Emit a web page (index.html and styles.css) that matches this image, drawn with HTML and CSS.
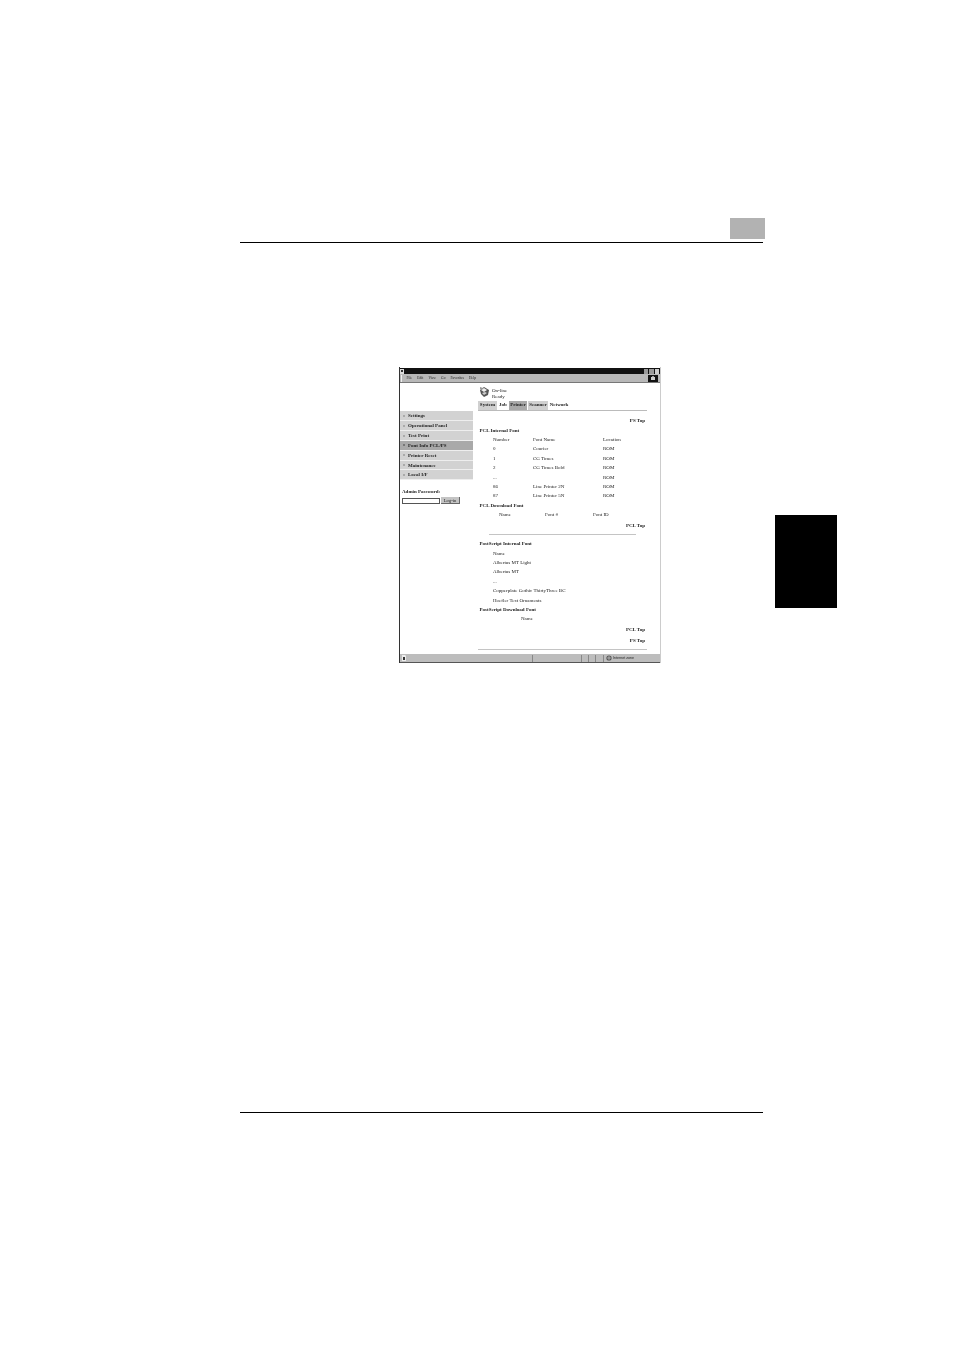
FILE: index.html
```html
<!DOCTYPE html>
<html lang="en">
<head>
<meta charset="utf-8">
<title>Font Info PCL/PS</title>
<link rel="stylesheet" href="styles.css">
</head>
<body>
<div class="page">
  <header class="head">
    <div class="chapter-box"></div>
    <div class="rule"></div>
  </header>
  <div class="middle">
    <div class="browser">
      <div class="titlebar">
        <svg class="app-icon" viewBox="0 0 5 5"><path d="M0 0h4v5H0z" fill="#ddd"/><path d="M1 1h2v2H1z" fill="#333"/></svg>
        <div class="winbtns"><span></span><span></span><span></span></div>
      </div>
      <div class="menubar">
        <span class="grip"></span>
        <span>File</span><span>Edit</span><span>View</span><span>Go</span><span>Favorites</span><span>Help</span>
        <div class="throbber"><svg viewBox="0 0 10 7"><path d="M3 2h4v3H3z" fill="#ccc"/><path d="M4 1h2v1H4z" fill="#999"/></svg></div>
      </div>
      <div class="content">
        <aside class="side">
          <nav class="nav">
            <div class="nav-item">Settings</div>
            <div class="nav-item">Operational Panel</div>
            <div class="nav-item">Test Print</div>
            <div class="nav-item active">Font Info PCL/PS</div>
            <div class="nav-item">Printer Reset</div>
            <div class="nav-item">Maintenance</div>
            <div class="nav-item">Local I/F</div>
          </nav>
          <div class="admin-label">Admin Password:</div>
          <div class="login"><span class="pw"></span><span class="login-btn">Log-in</span></div>
        </aside>
        <main class="main">
          <div class="status">
            <svg class="printer" viewBox="0 0 11 11">
              <path d="M1 4l4-3 5 3-1 5-4 2-3-3z" fill="#555"/>
              <path d="M2 4l3-2 3 2-3 2z" fill="#eee"/>
              <path d="M3 7l3-1 2 1-3 2z" fill="#ccc"/>
              <path d="M1 1l3 1-1 2-2-1z" fill="#999"/>
            </svg>
            <div class="status-text"><div>On-line</div><div>Ready</div></div>
          </div>
          <div class="tabs">
            <span class="tab gray t1">System</span>
            <span class="tab t2">Job</span>
            <span class="tab dark t3">Printer</span>
            <span class="tab gray t4">Scanner</span>
            <span class="tab t5">Network</span>
          </div>
          <div class="top-link first">PS Top</div>
          <div class="heading spaced">PCL Internal Font</div>
          <div class="row3"><span>Number</span><span>Font Name</span><span>Location</span></div>
          <div class="row3"><span>0</span><span>Courier</span><span>ROM</span></div>
          <div class="row3"><span>1</span><span>CG Times</span><span>ROM</span></div>
          <div class="row3"><span>2</span><span>CG Times Bold</span><span>ROM</span></div>
          <div class="row3"><span>...</span><span></span><span>ROM</span></div>
          <div class="row3"><span>86</span><span>Line Printer 2N</span><span>ROM</span></div>
          <div class="row3"><span>87</span><span>Line Printer 5N</span><span>ROM</span></div>
          <div class="heading">PCL Download Font</div>
          <div class="row-dl"><span>Name</span><span>Font #</span><span>Font ID</span></div>
          <div class="top-link nudge">PCL Top</div>
          <div class="hr short"></div>
          <div class="heading">PostScript Internal Font</div>
          <div class="row1">Name</div>
          <div class="row1">Albertus MT Light</div>
          <div class="row1">Albertus MT</div>
          <div class="row1">...</div>
          <div class="row1">Copperplate Gothic ThirtyThree BC</div>
          <div class="row1">Hoefler Text Ornaments</div>
          <div class="heading">PostScript Download Font</div>
          <div class="row1 center">Name</div>
          <div class="top-link nudge">PCL Top</div>
          <div class="top-link gap">PS Top</div>
          <div class="hr"></div>
        </main>
      </div>
      <div class="statusbar">
        <svg class="doc-icon" viewBox="0 0 6 6"><path d="M1 0h3l1 1v5H1z" fill="#eee"/><path d="M2 2h2v3H2z" fill="#333"/></svg>
        <span class="cell wide"></span><span class="cell"></span><span class="cell"></span><span class="cell"></span>
        <span class="zone"><svg viewBox="0 0 6 6"><circle cx="3" cy="3" r="2.6" fill="#555"/><path d="M1 3h4M3 1v4" stroke="#ddd" stroke-width=".6"/></svg>Internet zone</span>
      </div>
    </div>
    <div class="side-tab"></div>
  </div>
  <footer class="foot"></footer>
</div>
</body>
</html>
```
FILE: styles.css
```css
html, body { margin: 0; padding: 0; background: #fff; }
.page { width: 954px; height: 1350px; overflow: hidden; font-family: "Liberation Serif", serif; color: #111; }

.head { width: 525px; margin-left: 240px; padding-top: 218px; }
.chapter-box { width: 35px; height: 21px; background: #b2b2b2; margin-left: 490px; }
.rule { width: 523px; height: 1px; background: #000; margin-top: 3px; }

.middle { display: flex; align-items: flex-start; margin-left: 399px; margin-top: 124px; }
.browser { width: 262px; height: 296px; display: flex; flex-direction: column; filter: blur(.4px); font-size: 5px; color: #222; border-left: 1px solid #333; border-right: 1px solid #ccc; box-sizing: border-box; }
.side-tab { width: 62px; height: 93px; background: #000; margin-left: 114px; margin-top: 148px; }

.titlebar { height: 6px; margin-top: 1px; background: #111; display: flex; align-items: center; justify-content: space-between; }
.app-icon { width: 5px; height: 5px; }
.winbtns { display: flex; gap: 1px; margin-right: 1px; }
.winbtns span { width: 4.5px; height: 5px; background: #999; }
.winbtns span:last-child { background: #ccc; }

.menubar { height: 9px; background: #b8b8b8; display: flex; align-items: center; gap: 5.1px; font-size: 3.6px; position: relative; border-bottom: 1px solid #777; box-sizing: border-box; padding-left: .5px; }
.grip { width: 1px; height: 7px; background: #eee; }
.throbber { margin-left: auto; margin-right: 2px; width: 10px; height: 7px; background: #111; }
.throbber svg { display: block; width: 10px; height: 7px; }

.content { flex: 1; display: flex; gap: 5px; min-height: 0; background: #fff; }
.side { width: 73px; padding-top: 28.3px; }
.nav-item { height: 9.86px; line-height: 9.8px; background: #d2d2d2; border-bottom: .6px solid #eee; box-sizing: border-box; padding-left: 8px; font-weight: bold; position: relative; }
.nav-item::before { content: ""; position: absolute; left: 3px; top: 3.5px; width: 2px; height: 2px; background: #aaa; }
.nav-item.active { background: #a9a9a9; }
.nav-item.active::before { background: #777; }
.admin-label { font-weight: bold; padding-left: 2px; margin-top: 8px; line-height: 7px; }
.login { display: flex; padding-left: 2px; gap: 1px; margin-top: 3px; align-items: flex-start; }
.pw { width: 38px; height: 6px; border: .6px solid #555; box-sizing: border-box; background: #fff; }
.login-btn { width: 19px; height: 7px; background: #c4c4c4; border-right: .6px solid #666; border-bottom: .6px solid #666; box-sizing: border-box; text-align: center; line-height: 7px; font-size: 4.6px; margin-top: -1px; }

.main { width: 169px; line-height: 9.4px; }
.status { display: flex; height: 15px; padding-top: 3px; padding-left: 1px; gap: 2px; }
.printer { width: 11px; height: 11px; }
.status-text { line-height: 6px; padding-top: 1.5px; }
.tabs { display: flex; height: 8.5px; border-bottom: 1px solid #bbb; font-weight: bold; line-height: 8px; }
.tab { text-align: center; flex: none; }
.tab.gray { background: #d0d0d0; }
.tab.dark { background: #a9a9a9; }
.t1 { width: 19px; }
.t2 { width: 12px; }
.t3 { width: 18px; }
.t4 { width: 20px; margin-left: 1px; }
.t5 { width: 22px; }
.top-link { text-align: right; font-weight: bold; padding-right: 2px; }
.top-link.first { margin-top: 5px; }
.top-link.nudge { margin-top: 1.2px; }
.top-link.gap { margin-top: 1.4px; }
.heading { font-weight: bold; padding-left: 1.5px; }
.heading.spaced { margin-top: .6px; }
.row3 { display: grid; grid-template-columns: 40px 70px 1fr; padding-left: 15px; }
.row-dl { display: grid; grid-template-columns: 46px 48px 1fr; padding-left: 21px; }
.row1 { padding-left: 15px; }
.row1.center { padding-left: 43px; }
.hr { height: 1px; background: #c4c4c4; margin-top: 4px; }
.hr.short { width: 147px; margin: 4px 0 4px 11px; }

.statusbar { height: 9px; background: #bdbdbd; border-bottom: 1px solid #555; box-sizing: border-box; display: flex; align-items: center; }
.doc-icon { width: 6px; height: 6px; margin-left: 1px; }
.cell { height: 7px; width: 7px; border-left: .6px solid #888; box-sizing: border-box; flex: none; }
.cell.wide { margin-left: 125px; width: 49px; }
.zone { display: flex; align-items: center; gap: 1px; font-size: 3.6px; font-family: "Liberation Sans", sans-serif; border-left: .6px solid #888; padding-left: 2px; margin-left: 1px; height: 7px; }
.zone svg { width: 6px; height: 6px; }

.foot { width: 523px; height: 1px; background: #000; margin-left: 240px; margin-top: 449px; }
```
